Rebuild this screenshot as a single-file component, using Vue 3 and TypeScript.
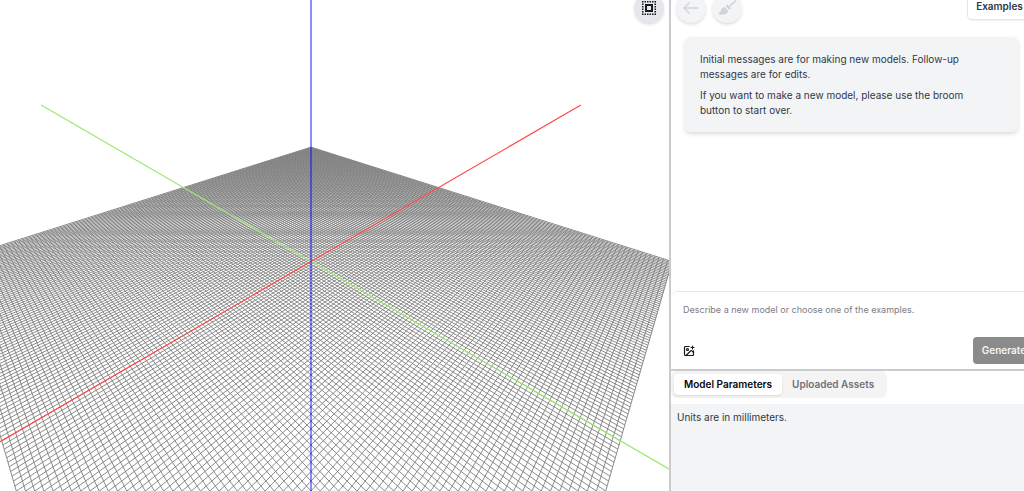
<script setup lang="ts">
import { ref } from 'vue'

type Point = { x: number; y: number }

const CELLS = 75
const ORIGIN: Point = { x: 311, y: 261.5 }
const SCALE_X = 180.6
const SCALE_Y = 104.7
const DEPTH = 0.416

/** Perspective projection of a ground-plane point onto the viewport. */
function project(u: number, v: number): Point {
  const w = 1 + DEPTH * (u + v)
  return {
    x: ORIGIN.x + (SCALE_X * (u - v)) / w,
    y: ORIGIN.y - (SCALE_Y * (u + v)) / w,
  }
}

function segment(a: Point, b: Point): string {
  return `M${a.x.toFixed(2)} ${a.y.toFixed(2)}L${b.x.toFixed(2)} ${b.y.toFixed(2)}`
}

const gridLines = Array.from({ length: CELLS * 2 + 1 }, (_, i) => {
  const k = (i - CELLS) / CELLS
  return [segment(project(k, -1), project(k, 1)), segment(project(-1, k), project(1, k))]
}).flat()

const redAxis = segment(project(-1.6, 0), project(3.95, 0))
const greenAxis = segment(project(0, -1.6), project(0, 3.95))

const prompt = ref('')
const tab = ref<'parameters' | 'assets'>('parameters')
</script>

<template>
  <div class="app">
    <main class="viewport">
      <svg class="scene" viewBox="0 0 669 491" preserveAspectRatio="xMidYMid slice" aria-hidden="true">
        <path v-for="(d, i) in gridLines" :key="i" class="grid" :d="d" />
        <path class="axis green" :d="greenAxis" />
        <path class="axis red" :d="redAxis" />
        <path class="axis blue" d="M311 -200V700" />
      </svg>
      <button class="round fit" type="button" aria-label="Fit view">
        <svg width="16" height="16" viewBox="0 0 16 16" fill="none" stroke="#17191e">
          <path d="M1 1.75H15M1 14.25H15M1.75 1V15M14.25 1V15" stroke-width="1.5" stroke-dasharray="1.5 1" />
          <rect x="5" y="5" width="6" height="6" stroke-width="2" />
        </svg>
      </button>
    </main>

    <aside class="side">
      <section class="chat">
        <header class="toolbar">
          <button class="round" type="button" disabled aria-label="Back">
            <svg width="18" height="18" viewBox="0 0 18 18" fill="none" stroke="#d1d5db" stroke-width="1.5" stroke-linecap="round" stroke-linejoin="round">
              <path d="M16 9H2M7 4L2 9l5 5" />
            </svg>
          </button>
          <button class="round" type="button" disabled aria-label="Start over">
            <svg width="20" height="20" viewBox="0 0 20 20" fill="#d1d5db">
              <path d="M18.4 2.8 12.8 8" stroke="#d1d5db" stroke-width="1.6" stroke-linecap="round" />
              <path d="M10 6.2 14.2 10.2 12.4 11.8 8.6 8.2Z" />
              <path d="M7.6 9 11.2 12.4C10.8 15.8 8 17.4 1 16.6L2.8 15.2 1.4 15 3.6 13.2C4 10.8 5.4 9.2 7.6 9Z" />
            </svg>
          </button>
          <button class="examples" type="button">Examples</button>
        </header>
        <div class="notice">
          <p>Initial messages are for making new models. Follow-up messages are for edits.</p>
          <p>If you want to make a new model, please use the broom button to start over.</p>
        </div>
        <form class="composer" @submit.prevent>
          <textarea v-model="prompt" rows="2" aria-label="Model description" placeholder="Describe a new model or choose one of the examples."></textarea>
          <div class="actions">
            <button class="attach" type="button" aria-label="Add image">
              <svg width="12" height="12" viewBox="0 0 24 24" fill="none" stroke="#17191e" stroke-width="2.4" stroke-linecap="round" stroke-linejoin="round">
                <path d="M16 5h6M19 2v6M21 11.5V19a2 2 0 0 1-2 2H5a2 2 0 0 1-2-2V5a2 2 0 0 1 2-2h7.5" />
                <path d="m21 15-3.1-3.1a2 2 0 0 0-2.8 0L6 21" />
                <circle cx="9" cy="9" r="2" />
              </svg>
            </button>
            <button class="generate" type="submit">Generate</button>
          </div>
        </form>
      </section>

      <section class="details">
        <div class="tabs" role="tablist">
          <button type="button" role="tab" :aria-selected="tab === 'parameters'" :class="{ active: tab === 'parameters' }" @click="tab = 'parameters'">Model Parameters</button>
          <button type="button" role="tab" :aria-selected="tab === 'assets'" :class="{ active: tab === 'assets' }" @click="tab = 'assets'">Uploaded Assets</button>
        </div>
        <div class="panel" role="tabpanel">
          <p v-if="tab === 'parameters'">Units are in millimeters.</p>
        </div>
      </section>
    </aside>
  </div>
</template>

<style>
body {
  margin: 0;
  overflow: hidden;
}
</style>

<style scoped>
.app {
  display: grid;
  grid-template-columns: minmax(0, 669fr) minmax(0, 355fr);
  height: 100vh;
  overflow: hidden;
  background: #fff;
  color: #2f3846;
  font-family: Inter, "Liberation Sans", sans-serif;
  font-size: 10px;
  line-height: 15px;
}

button {
  padding: 0;
  border: 0;
  font: inherit;
  color: inherit;
}

p {
  margin: 0;
}

.viewport {
  position: relative;
  min-height: 0;
  overflow: hidden;
}

.scene {
  display: block;
  width: 100%;
  height: 100%;
}

.grid {
  fill: none;
  stroke: #808080;
  stroke-width: 1;
  stroke-opacity: 0.9;
}

.axis {
  fill: none;
  stroke-width: 1.2;
}

.red {
  stroke: #ff4a4a;
}

.green {
  stroke: #9be870;
}

.blue {
  stroke: #0000ff;
  stroke-opacity: 0.45;
  stroke-width: 2;
}

.round {
  display: flex;
  flex: none;
  align-items: center;
  justify-content: center;
  width: 30px;
  height: 30px;
  border-radius: 50%;
  background: #f3f4f6;
  box-shadow: 0 2px 3px rgb(0 0 0 / 12%);
}

.fit {
  position: absolute;
  top: -7px;
  right: 5px;
  background: #e5e7eb;
}

.side {
  display: flex;
  flex-direction: column;
  min-height: 0;
  border-left: 2px solid #cacacf;
  overflow: hidden;
}

.chat {
  display: flex;
  flex: 371 1 0;
  flex-direction: column;
  min-height: 0;
  border-bottom: 2px solid #cacacf;
  box-sizing: border-box;
}

.toolbar {
  display: flex;
  flex: none;
  align-items: center;
  gap: 6px;
  margin: -7px -8px 0 5px;
}

.examples {
  flex: none;
  align-self: flex-start;
  box-sizing: border-box;
  width: 65px;
  height: 27px;
  margin-left: auto;
  border: 1px solid #e5e7eb;
  border-radius: 5px;
  background: #fff;
  box-shadow: 0 1px 1px rgb(0 0 0 / 5%);
  font-weight: 600;
}

.notice {
  display: flex;
  flex-direction: column;
  gap: 6px;
  margin: 14px 6px 0 14px;
  padding: 15px 32px 14px 15px;
  border-radius: 6px;
  background: #f3f4f6;
  box-shadow: 0 2px 4px rgb(0 0 0 / 14%);
}

.composer {
  box-sizing: border-box;
  height: 78px;
  margin: auto -16px 0 0;
  padding: 10px 12px 5px;
  border: 1px solid #e8e8eb;
  border-bottom: 0;
  border-left: 0;
  border-radius: 6px;
}

.composer textarea {
  display: block;
  box-sizing: border-box;
  width: 100%;
  height: 35px;
  padding: 0;
  border: 0;
  outline: 0;
  resize: none;
  overflow: hidden;
  background: transparent;
  color: #2f3846;
  font: 9px/15px Inter, "Liberation Sans", sans-serif;
}

.composer textarea::placeholder {
  color: #7c7c84;
  opacity: 1;
}

.actions {
  display: flex;
  align-items: center;
  justify-content: space-between;
}

.attach {
  display: flex;
  background: transparent;
}

.generate {
  width: 62px;
  height: 27px;
  margin-right: -8px;
  border-radius: 4px;
  background: #8b8b8c;
  color: #f4f4f5;
  font-weight: 600;
}

.details {
  display: flex;
  flex: 120 1 0;
  flex-direction: column;
  min-height: 0;
}

.tabs {
  display: flex;
  align-self: flex-start;
  margin-bottom: 6px;
  padding: 3px;
  border-radius: 6px;
  background: #f4f4f5;
}

.tabs button {
  height: 21px;
  padding: 0 10px;
  border-radius: 4px;
  background: transparent;
  color: #71717a;
  font-weight: 600;
}

.tabs .active {
  background: #fff;
  box-shadow: 0 1px 2px rgb(0 0 0 / 12%);
  color: #09090b;
}

.panel {
  flex: 1;
  padding: 6px;
  background: #f3f4f6;
}
</style>
